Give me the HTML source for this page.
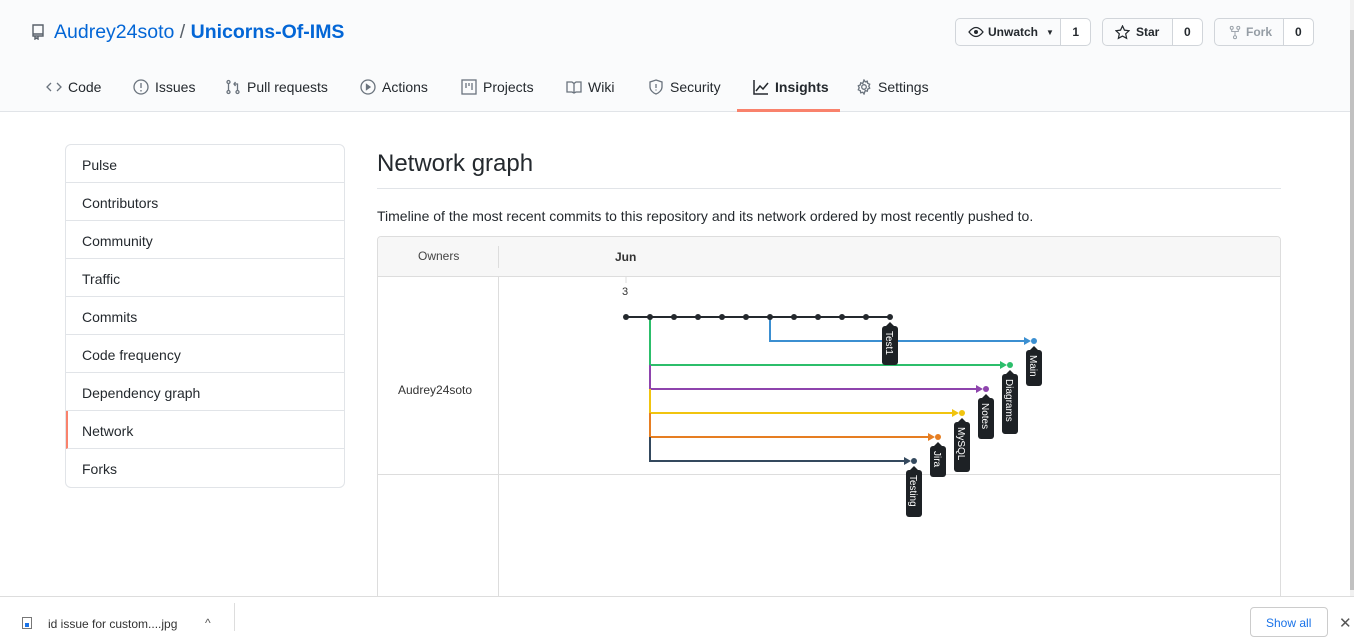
<!DOCTYPE html>
<html><head><meta charset="utf-8"><style>
*{box-sizing:border-box;margin:0;padding:0}
body{width:1354px;height:631px;overflow:hidden;background:#fff;font-family:"Liberation Sans",sans-serif;color:#24292e;position:relative}
.hdr{position:absolute;left:0;top:0;width:1350px;height:112px;background:#fafbfc;border-bottom:1px solid #e1e4e8}
.t{position:absolute;white-space:nowrap}
.nav{position:absolute;top:79px;font-size:14px;color:#24292e;display:flex;align-items:center;gap:6px}
.nav svg{stroke:#6a737d;fill:none;stroke-width:1.3}
.btn{position:absolute;top:18px;height:28px;border:1px solid #d1d5da;border-radius:5px;background:#fafbfc;font-size:12px;font-weight:bold;display:flex;align-items:center}
.btn .c{border-left:1px solid #d1d5da;height:100%;display:flex;align-items:center;justify-content:center;background:#fff;border-radius:0 5px 5px 0}
.side{position:absolute;left:65px;top:144px;width:280px;border:1px solid #e1e4e8;border-radius:6px}
.side div{height:38px;border-bottom:1px solid #e1e4e8;font-size:14px;padding:12px 16px 0;line-height:16px}
.side div:last-child{border-bottom:0}
</style></head><body>
<div class="hdr"></div>
<svg class="t" style="left:31px;top:24px" width="14" height="16" viewBox="0 0 14 16"><path d="M2 1h10v11H2zM2 10h10M4 12v3l1.5-1 1.5 1v-3" fill="none" stroke="#586069" stroke-width="1.4"/></svg>
<div class="t" style="left:54px;top:21px;font-size:19.5px;color:#0366d6">Audrey24soto <span style="color:#586069">/</span> <b>Unicorns-Of-IMS</b></div>
<div class="btn" style="left:955px;width:136px"><span style="width:106px;padding-left:12px;display:flex;align-items:center;gap:4px"><svg width="16" height="12" viewBox="0 0 16 12"><path d="M1 6Q8-3 15 6Q8 15 1 6z" fill="none" stroke="#24292e" stroke-width="1.3"/><circle cx="8" cy="6" r="2" fill="#24292e"/></svg>Unwatch <span style="font-size:8px;margin-left:4px">▼</span></span><span class="c" style="width:30px">1</span></div>
<div class="btn" style="left:1102px;width:101px"><span style="width:70px;padding-left:12px;display:flex;align-items:center;gap:6px"><svg width="15" height="15" viewBox="0 0 16 16"><path d="M8 1l2.1 4.5 4.9.6-3.6 3.3 1 4.8L8 11.8 3.6 14.2l1-4.8L1 6.1l4.9-.6z" fill="none" stroke="#24292e" stroke-width="1.3"/></svg>Star</span><span class="c" style="width:31px">0</span></div>
<div class="btn" style="left:1214px;width:100px;color:#959da5"><span style="width:69px;padding-left:14px;display:flex;align-items:center;gap:5px"><svg width="12" height="15" viewBox="0 0 12 16"><circle cx="2.5" cy="3" r="1.6" fill="none" stroke="#959da5"/><circle cx="9.5" cy="3" r="1.6" fill="none" stroke="#959da5"/><circle cx="6" cy="13" r="1.6" fill="none" stroke="#959da5"/><path d="M2.5 5v2h7V5M6 7v4" fill="none" stroke="#959da5"/></svg>Fork</span><span class="c" style="width:31px;color:#24292e">0</span></div>

<div class="nav" style="left:46px"><svg width="16" height="16"><path d="M5 4L1 8l4 4M11 4l4 4-4 4"/></svg> Code</div>
<div class="nav" style="left:133px"><svg width="16" height="16"><circle cx="8" cy="8" r="7"/><path d="M8 4v5M8 11v1.5"/></svg> Issues</div>
<div class="nav" style="left:225px"><svg width="16" height="16"><circle cx="3.5" cy="13" r="1.5"/><circle cx="3.5" cy="3" r="1.5"/><path d="M3.5 4.5v7M12.5 11.5V5H9M10.5 3L9 5l1.5 2"/><circle cx="12.5" cy="13" r="1.5"/></svg> Pull requests</div>
<div class="nav" style="left:360px"><svg width="16" height="16"><circle cx="8" cy="8" r="7"/><path d="M6.5 5.5l3.5 2.5-3.5 2.5z" fill="#6a737d"/></svg> Actions</div>
<div class="nav" style="left:461px"><svg width="16" height="16"><rect x="1" y="1" width="14" height="14"/><path d="M5 4v5M8 4v3M11 4v7"/></svg> Projects</div>
<div class="nav" style="left:566px"><svg width="16" height="16"><path d="M1 3h5l2 1.5L10 3h5v10h-5l-2 1-2-1H1zM8 4.5v9.5"/></svg> Wiki</div>
<div class="nav" style="left:648px"><svg width="16" height="16"><path d="M8 1l6 2v5c0 3-3 6-6 7-3-1-6-4-6-7V3z"/><path d="M8 5v4M8 10.5v1"/></svg> Security</div>
<div class="nav" style="left:753px;font-weight:bold"><svg width="16" height="16" style="stroke:#24292e;stroke-width:1.5"><path d="M1 1v14h14M3 12l4-5 3 3 5-6"/></svg> Insights</div>
<div style="position:absolute;left:737px;top:109px;width:103px;height:3px;background:#f9826c"></div>
<div class="nav" style="left:856px"><svg width="16" height="16"><circle cx="8" cy="8" r="2.3"/><path d="M8 1l1.2 1.8 2.1-.6.4 2.1 2 .9-.9 2 .9 2-2 .9-.4 2.1-2.1-.6L8 15l-1.2-1.8-2.1.6-.4-2.1-2-.9.9-2-.9-2 2-.9.4-2.1 2.1.6z"/></svg> Settings</div>

<div class="side">
<div>Pulse</div><div>Contributors</div><div>Community</div><div>Traffic</div><div>Commits</div><div>Code frequency</div><div>Dependency graph</div><div style="border-left:2px solid #f9826c;padding-left:14px">Network</div><div>Forks</div>
</div>

<div class="t" style="left:377px;top:150px;font-size:24px;font-weight:300">Network graph</div>
<div style="position:absolute;left:377px;top:188px;width:904px;height:1px;background:#e1e4e8"></div>
<div class="t" style="left:377px;top:208px;font-size:14px">Timeline of the most recent commits to this repository and its network ordered by most recently pushed to.</div>

<div style="position:absolute;left:377px;top:236px;width:904px;height:380px;border:1px solid #ddd;border-radius:4px;overflow:hidden">
<div style="position:absolute;left:0;top:0;width:100%;height:40px;background:#f7f7f7;border-bottom:1px solid #ddd"></div>
<div style="position:absolute;left:120px;top:40px;width:1px;height:340px;background:#ddd"></div>
<div style="position:absolute;left:120px;top:9px;width:1px;height:22px;background:#ddd"></div>
<div style="position:absolute;left:0;top:237px;width:100%;height:1px;background:#ddd"></div>
<div class="t" style="left:40px;top:12px;font-size:12px;color:#444">Owners</div>
<div class="t" style="left:237px;top:13px;font-size:12px;font-weight:bold;color:#333">Jun</div>
<div class="t" style="left:20px;top:146px;font-size:12px;color:#333">Audrey24soto</div>
</div>

<svg style="position:absolute;left:0;top:0" width="1354" height="631">
<line x1="626" y1="276" x2="626" y2="283" stroke="#ddd"/>
<text x="622" y="295" font-size="11" fill="#333" font-family="Liberation Sans">3</text>
<g fill="none" stroke-width="2">
<path d="M770 317V341H1028" stroke="#3b8fd1"/>
<path d="M650 317V365H1004" stroke="#2cbe6b"/>
<path d="M650 365V389H980" stroke="#8e44ad"/>
<path d="M650 389V413H956" stroke="#f1c40f"/>
<path d="M650 413V437H932" stroke="#e67e22"/>
<path d="M650 437V461H908" stroke="#34495e"/>
<path d="M626 317H890" stroke="#24292e"/>
</g>
<g>
<path d="M1024 337l7 4-7 4z" fill="#3b8fd1"/><path d="M1000 361l7 4-7 4z" fill="#2cbe6b"/><path d="M976 385l7 4-7 4z" fill="#8e44ad"/><path d="M952 409l7 4-7 4z" fill="#f1c40f"/><path d="M928 433l7 4-7 4z" fill="#e67e22"/><path d="M904 457l7 4-7 4z" fill="#34495e"/>
<circle cx="1034" cy="341" r="3" fill="#3b8fd1"/><circle cx="1010" cy="365" r="3" fill="#2cbe6b"/><circle cx="986" cy="389" r="3" fill="#8e44ad"/><circle cx="962" cy="413" r="3" fill="#f1c40f"/><circle cx="938" cy="437" r="3" fill="#e67e22"/><circle cx="914" cy="461" r="3" fill="#34495e"/>
</g>
<g fill="#24292e">
<circle cx="626" cy="317" r="3"/><circle cx="650" cy="317" r="3"/><circle cx="674" cy="317" r="3"/><circle cx="698" cy="317" r="3"/><circle cx="722" cy="317" r="3"/><circle cx="746" cy="317" r="3"/><circle cx="770" cy="317" r="3"/><circle cx="794" cy="317" r="3"/><circle cx="818" cy="317" r="3"/><circle cx="842" cy="317" r="3"/><circle cx="866" cy="317" r="3"/><circle cx="890" cy="317" r="3"/>
</g>
<g fill="#1d2125">
<path d="M890 322l4 4h-8z"/><rect x="882" y="326" width="16" height="39" rx="3"/>
<path d="M1034 346l4 4h-8z"/><rect x="1026" y="350" width="16" height="36" rx="3"/>
<path d="M1010 370l4 4h-8z"/><rect x="1002" y="374" width="16" height="60" rx="3"/>
<path d="M986 394l4 4h-8z"/><rect x="978" y="398" width="16" height="41" rx="3"/>
<path d="M962 418l4 4h-8z"/><rect x="954" y="422" width="16" height="50" rx="3"/>
<path d="M938 442l4 4h-8z"/><rect x="930" y="446" width="16" height="31" rx="3"/>
<path d="M914 466l4 4h-8z"/><rect x="906" y="470" width="16" height="47" rx="3"/>
</g>
<g fill="#fff" font-family="Liberation Sans" font-size="10">
<text transform="translate(886,331) rotate(90)">Test1</text>
<text transform="translate(1030,355) rotate(90)">Main</text>
<text transform="translate(1006,379) rotate(90)">Diagrams</text>
<text transform="translate(982,403) rotate(90)">Notes</text>
<text transform="translate(958,427) rotate(90)">MySQL</text>
<text transform="translate(934,451) rotate(90)">Jira</text>
<text transform="translate(910,475) rotate(90)">Testing</text>
</g>
</svg>

<div style="position:absolute;left:1350px;top:0;width:4px;height:596px;background:#f1f1f1"></div>
<div style="position:absolute;left:1350px;top:30px;width:4px;height:560px;background:#c1c1c1"></div>
<div style="position:absolute;left:0;top:596px;width:1354px;height:35px;background:#fff;border-top:1px solid #ddd"></div>
<div style="position:absolute;left:22px;top:617px;width:10px;height:12px;border:1px solid #777"><div style="position:absolute;left:2px;top:5px;width:4px;height:4px;background:#1a73e8"></div></div>
<div class="t" style="left:48px;top:617px;font-size:12px;color:#333">id issue for custom....jpg</div>
<div class="t" style="left:205px;top:616px;font-size:12px;color:#555">^</div>
<div style="position:absolute;left:234px;top:603px;width:1px;height:28px;background:#ddd"></div>
<div style="position:absolute;left:1250px;top:607px;width:78px;height:30px;border:1px solid #ccc;border-radius:4px"></div>
<div class="t" style="left:1266px;top:616px;font-size:12px;color:#1a73e8">Show all</div>
<div class="t" style="left:1339px;top:614px;font-size:15px;color:#555">✕</div>
</body></html>
